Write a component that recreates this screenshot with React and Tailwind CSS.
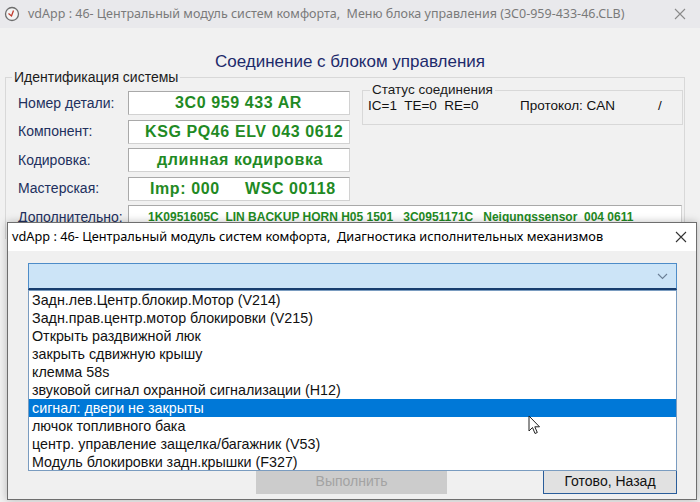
import React from "react";

const items = [
  "Задн.лев.Центр.блокир.Мотор (V214)",
  "Задн.прав.центр.мотор блокировки (V215)",
  "Открыть раздвижной люк",
  "закрыть сдвижную крышу",
  "клемма 58s",
  "звуковой сигнал охранной сигнализации (H12)",
  "сигнал: двери не закрыты",
  "лючок топливного бака",
  "центр. управление защелка/багажник (V53)",
  "Модуль блокировки задн.крышки (F327)",
];

const rows = [
  { label: "Номер детали:", value: "3C0 959 433 AR", cls: "pl-[46px]" },
  { label: "Компонент:", value: "KSG PQ46 ELV 043 0612", cls: "pl-[16px]" },
  { label: "Кодировка:", value: "длинная кодировка", cls: "pl-[28px]" },
  { label: "Мастерская:", value: "Imp: 000     WSC 00118", cls: "pl-[21px]" },
];

const CloseX = ({ color }) => (
  <svg width="12" height="12" viewBox="0 0 12 12">
    <path d="M1 1 L11 11 M11 1 L1 11" stroke={color} strokeWidth="1.1" fill="none" />
  </svg>
);

const App = () => {
  return (
    <div className="w-[700px] h-[502px] relative overflow-hidden bg-[#f1f1f1] font-['Liberation_Sans',Arial,sans-serif]">
      {/* back window */}
      <div className="h-[28px] bg-[#e9e9ec] flex items-center pl-[4px] pr-[14px]">
        <svg width="16" height="16" viewBox="0 0 16 16" className="mr-[8px]">
          <circle cx="8" cy="8" r="6.5" stroke="#6d6d6d" strokeWidth="1.3" fill="#f4f4f4" />
          <path d="M4.5 7.5 L7.5 10 L9.5 4.5" stroke="#c0392b" strokeWidth="1.3" fill="none" />
        </svg>
        <span className="font-['Noto_Sans',sans-serif] text-[12.5px] text-[#7a7a7a] whitespace-nowrap">
          vdApp : 46- Центральный модуль систем комфорта,&nbsp; Меню блока управления (3C0-959-433-46.CLB)
        </span>
        <div className="ml-auto">
          <CloseX color="#8a8a8a" />
        </div>
      </div>

      <div className="text-center text-[17px] text-[#1d2a6b] leading-[20px] mt-[24px]">
        Соединение с блоком управления
      </div>

      <fieldset className="ml-[5px] mt-[-3px] w-[680px] border border-b-0 border-[#d8d8d8] pb-[10px]">
        <legend className="ml-[6px] px-[2px] text-[14px] leading-[16px] text-[#1b1b1b]">
          Идентификация системы
        </legend>
        <div className="flex">
          <div className="flex flex-col gap-[4.5px] pt-[6px] pl-[12px]">
            {rows.map((r) => (
              <div key={r.label} className="flex items-center h-[24px]">
                <div className="w-[110px] text-[14px] text-[#22305e]">{r.label}</div>
                <div
                  className={`w-[222px] h-[24px] flex items-center bg-white border border-[#d2d2d2] border-t-[#a9a9a9] border-l-[#a9a9a9] text-[16px] tracking-[0.6px] font-bold text-[#1f8a24] whitespace-pre overflow-hidden ${r.cls}`}
                >
                  {r.value}
                </div>
              </div>
            ))}
          </div>
          <fieldset className="ml-[12px] mt-[-3px] w-[321px] h-[43px] border border-[#d8d8d8] pl-[5px]">
            <legend className="ml-[2px] px-[2px] text-[13.5px] leading-[16px] text-[#1b1b1b]">
              Статус соединения
            </legend>
            <div className="flex text-[13.5px] leading-[16px] text-[#111]">
              <span className="w-[152px] whitespace-pre">IC=1  TE=0  RE=0</span>
              <span className="w-[138px]">Протокол: CAN</span>
              <span>/</span>
            </div>
          </fieldset>
        </div>
        <div className="flex items-center h-[24px] pl-[12px] mt-[4.5px]">
          <div className="w-[110px] text-[14px] text-[#22305e]">Дополнительно:</div>
          <div className="w-[554px] h-[24px] flex items-center pl-[19px] bg-white border border-[#d2d2d2] border-t-[#a9a9a9] border-l-[#a9a9a9] text-[12px] font-bold text-[#1f8a24] whitespace-pre overflow-hidden">
            1K0951605C  LIN BACKUP HORN H05 1501   3C0951171C   Neigungssensor  004 0611
          </div>
        </div>
      </fieldset>

      {/* front dialog */}
      <div className="absolute left-[7px] top-[222px] w-[690px] h-[278px] border border-[#6e6e6e] bg-[#f0f0f0] flex flex-col shadow-[0_0_8px_rgba(0,0,0,0.25)]">
        <div className="h-[28px] bg-white flex items-center pl-[4px] pr-[9px] shrink-0">
          <span className="font-['Noto_Sans',sans-serif] text-[12.75px] text-black whitespace-nowrap">
            vdApp : 46- Центральный модуль систем комфорта,&nbsp; Диагностика исполнительных механизмов
          </span>
          <div className="ml-auto">
            <CloseX color="#333" />
          </div>
        </div>

        <div className="relative ml-[20px] mt-[12px] w-[649px] h-[27px] bg-[#cce4f7] border border-[#4d8cc8] border-b-2 border-b-[#183d6e] flex items-center justify-end pr-[8px]">
          <svg width="11" height="7" viewBox="0 0 11 7">
            <path d="M1 1 L5.5 5.5 L10 1" stroke="#6b7f96" strokeWidth="1.1" fill="none" />
          </svg>
          <div className="absolute left-[-1px] top-[26px] w-[649px] h-[181px] bg-white border border-[#7a9cc0] z-10 text-[14.3px] leading-[18px] text-[#111]">
            {items.map((it, i) => (
              <div
                key={it}
                className={`h-[18px] pl-[3px] whitespace-nowrap ${
                  i === 6 ? "bg-[#0078d7] text-white" : ""
                }`}
              >
                {it}
              </div>
            ))}
          </div>
        </div>

        <div className="mt-auto mb-[5px] flex items-center pl-[248px] pr-[19px]">
          <div className="w-[191px] h-[26px] bg-[#cccccc] flex items-center justify-center text-[14px] text-[#a3a3a3]">
            Выполнить
          </div>
          <div className="ml-auto w-[134px] h-[26px] bg-[#e1e1e1] border border-[#2a5d9a] flex items-center justify-center text-[14px] text-[#111]">
            Готово, Назад
          </div>
        </div>
      </div>

      {/* mouse pointer */}
      <svg className="absolute left-[528px] top-[415px] z-20" width="14" height="21" viewBox="0 0 14 21">
        <path
          d="M1 1 L1 16 L4.5 12.5 L7 18.5 L9.3 17.5 L6.8 11.8 L11.5 11.8 Z"
          fill="white"
          stroke="#222"
          strokeWidth="1"
          strokeLinejoin="round"
        />
      </svg>
    </div>
  );
};

export default App;
